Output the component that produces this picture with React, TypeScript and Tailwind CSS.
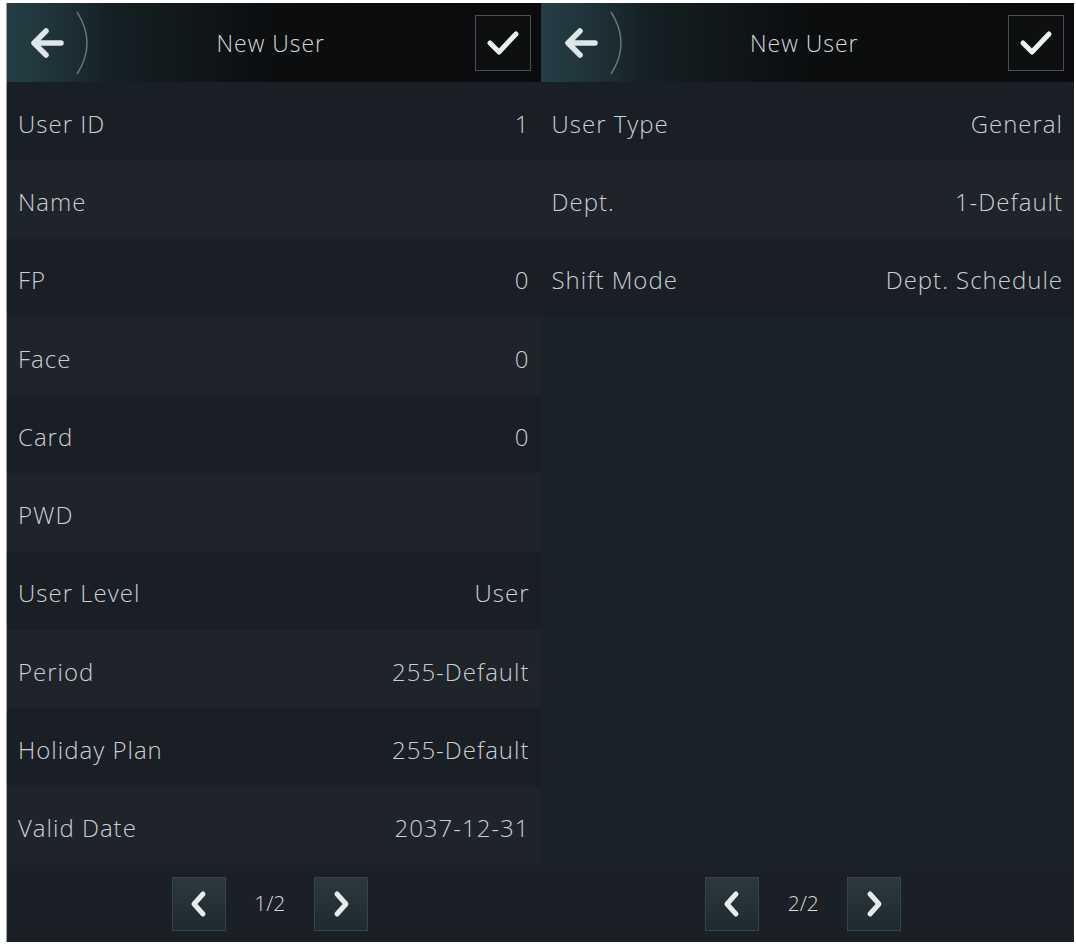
import React from "react";

type Row = { label: string; value?: string };

const pageOne: Row[] = [
  { label: "User ID", value: "1" },
  { label: "Name" },
  { label: "FP", value: "0" },
  { label: "Face", value: "0" },
  { label: "Card", value: "0" },
  { label: "PWD" },
  { label: "User Level", value: "User" },
  { label: "Period", value: "255-Default" },
  { label: "Holiday Plan", value: "255-Default" },
  { label: "Valid Date", value: "2037-12-31" },
];

const pageTwo: Row[] = [
  { label: "User Type", value: "General" },
  { label: "Dept.", value: "1-Default" },
  { label: "Shift Mode", value: "Dept. Schedule" },
];

function Header() {
  return (
    <div className="h-[79px] flex items-center bg-gradient-to-r from-[#1c2e33] via-[#0b0d0f] to-[#090b0c]">
      {/* back button */}
      <div className="w-[100px] h-full flex items-center pl-[14px] bg-gradient-to-r from-[#243d44] to-transparent">
        <svg width="76" height="70" viewBox="0 0 76 70" fill="none">
          <path d="M40 35 H14 M25 23 L13 35 L25 47" stroke="#dfe6e8" strokeWidth="5.5" strokeLinecap="round" strokeLinejoin="round" />
          <path d="M56 4 Q76 35 56 66" stroke="#60777c" strokeWidth="1.5" />
        </svg>
      </div>
      <div className="flex-1 text-center text-[23px] font-light tracking-[1px] text-[#d4d8da] pr-[40px] pt-[2px]">New User</div>
      <div className="w-[56px] h-[56px] mr-[10px] border border-[#4b4f52] bg-[#0d0f11] flex items-center justify-center">
        <svg width="36" height="30" viewBox="0 0 36 30" fill="none">
          <path d="M5 15 L14 24 L31 6" stroke="#eef1f2" strokeWidth="5" strokeLinecap="round" strokeLinejoin="round" />
        </svg>
      </div>
    </div>
  );
}

function PageButton({ dir }: { dir: "prev" | "next" }) {
  return (
    <div className="w-[54px] h-[54px] bg-gradient-to-b from-[#2b383e] to-[#1f2a30] border border-[#35434a] flex items-center justify-center">
      <svg width="24" height="30" viewBox="0 0 24 30" fill="none">
        {dir === "prev" ? (
          <path d="M16 5 L7 15 L16 25" stroke="#e6ecee" strokeWidth="5" strokeLinecap="round" strokeLinejoin="round" />
        ) : (
          <path d="M8 5 L17 15 L8 25" stroke="#e6ecee" strokeWidth="5" strokeLinecap="round" strokeLinejoin="round" />
        )}
      </svg>
    </div>
  );
}

function Panel({ rows, page }: { rows: Row[]; page: string }) {
  return (
    <div className="flex-1 flex flex-col bg-[#1b2128]">
      <Header />
      <div className="h-[783px] flex flex-col">
        {rows.map((r, i) => (
          <div
            key={r.label}
            className={`h-[78.3px] flex items-center justify-between pl-[11px] pr-[11px] pt-[5px] text-[24px] font-light tracking-[1px] text-[#c9cfd2] ${
              i % 2 === 1 ? "bg-[#1e2429]" : "bg-[#1a1f25]"
            }`}
          >
            <span>{r.label}</span>
            <span>{r.value}</span>
          </div>
        ))}
      </div>
      <div className="flex-1 flex items-center justify-center gap-[24px] pr-[8px] bg-[#1b2026]">
        <PageButton dir="prev" />
        <span className="text-[21px] font-light text-[#d6dbdd] w-[40px] text-center">{page}</span>
        <PageButton dir="next" />
      </div>
    </div>
  );
}

export default function App() {
  return (
    <div
      className="w-[1076px] h-[945px] bg-white pt-[3px] pl-[6px] pr-[2px] pb-[3px]"
      style={{ fontFamily: '"Open Sans", "Noto Sans", sans-serif' }}
    >
      <div className="w-full h-full flex border-l border-[#9aa0a4]">
        <Panel rows={pageOne} page="1/2" />
        <Panel rows={pageTwo} page="2/2" />
      </div>
    </div>
  );
}
